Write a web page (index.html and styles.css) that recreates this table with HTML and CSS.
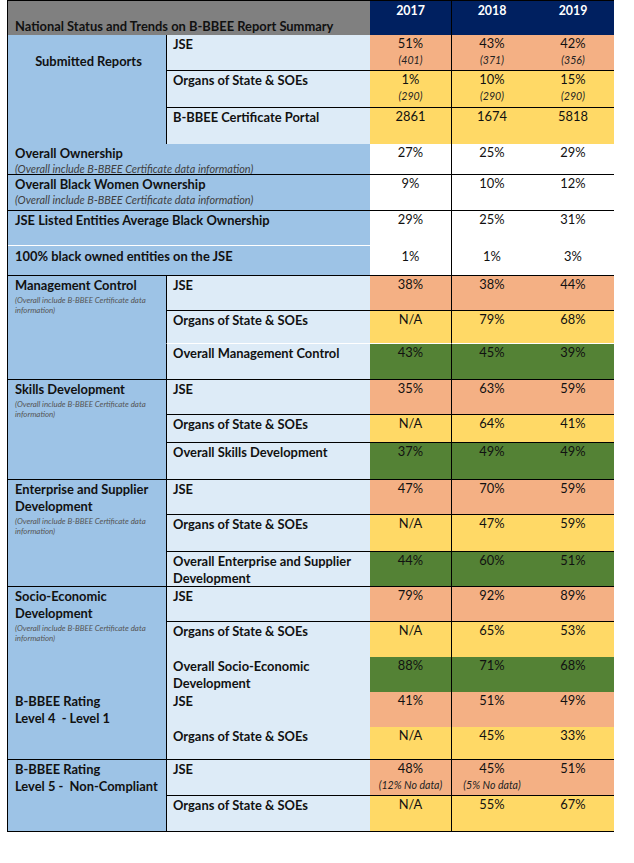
FILE: index.html
```html
<!DOCTYPE html>
<html lang="en">
<head>
<meta charset="utf-8">
<title>National Status and Trends on B-BBEE Report Summary</title>
<link rel="stylesheet" href="styles.css">
</head>
<body>
<div class="sheet">
  <div class="hd-title">National Status and Trends on B-BBEE Report Summary</div>
  <div class="hd-year">2017</div>
  <div class="hd-year mid">2018</div>
  <div class="hd-year">2019</div>

  <!-- Submitted Reports -->
  <div class="grp span3 centered">Submitted Reports</div>
  <div class="lbl bk">JSE</div>
  <div class="val or bk">51%<i>(401)</i></div>
  <div class="val or bk mid">43%<i>(371)</i></div>
  <div class="val or bk">42%<i>(356)</i></div>

  <div class="lbl bk">Organs of State &amp; SOEs</div>
  <div class="val ye bk">1%<i>(290)</i></div>
  <div class="val ye bk mid">10%<i>(290)</i></div>
  <div class="val ye bk">15%<i>(290)</i></div>

  <div class="lbl">B-BBEE Certificate Portal</div>
  <div class="val ye">2861</div>
  <div class="val ye mid">1674</div>
  <div class="val ye">5818</div>

  <!-- Ownership -->
  <div class="grp wide bk">Overall Ownership<em class="note">(Overall include B-BBEE Certificate data information)</em></div>
  <div class="val wh bk">27%</div>
  <div class="val wh bk mid">25%</div>
  <div class="val wh bk">29%</div>

  <div class="grp wide bk">Overall Black Women Ownership<em class="note">(Overall include B-BBEE Certificate data information)</em></div>
  <div class="val wh bk">9%</div>
  <div class="val wh bk mid">10%</div>
  <div class="val wh bk">12%</div>

  <div class="grp wide wl">JSE Listed Entities Average Black Ownership</div>
  <div class="val wh">29%</div>
  <div class="val wh mid">25%</div>
  <div class="val wh">31%</div>

  <div class="grp wide bk lower">100% black owned entities on the JSE</div>
  <div class="val wh bk lower">1%</div>
  <div class="val wh bk mid lower">1%</div>
  <div class="val wh bk lower">3%</div>

  <!-- Management Control -->
  <div class="grp span3 bk">Management Control<em class="tiny">(Overall include B-BBEE Certificate data information)</em></div>
  <div class="lbl bk">JSE</div>
  <div class="val or bk">38%</div>
  <div class="val or bk mid">38%</div>
  <div class="val or bk">44%</div>

  <div class="lbl wl">Organs of State &amp; SOEs</div>
  <div class="val ye wl">N/A</div>
  <div class="val ye wl mid">79%</div>
  <div class="val ye wl">68%</div>

  <div class="lbl bk">Overall Management Control</div>
  <div class="val gr bk">43%</div>
  <div class="val gr bk mid">45%</div>
  <div class="val gr bk">39%</div>

  <!-- Skills Development -->
  <div class="grp span3 bk">Skills Development<em class="tiny">(Overall include B-BBEE Certificate data information)</em></div>
  <div class="lbl bk">JSE</div>
  <div class="val or bk">35%</div>
  <div class="val or bk mid">63%</div>
  <div class="val or bk">59%</div>

  <div class="lbl bk">Organs of State &amp; SOEs</div>
  <div class="val ye bk">N/A</div>
  <div class="val ye bk mid">64%</div>
  <div class="val ye bk">41%</div>

  <div class="lbl bk">Overall Skills Development</div>
  <div class="val gr bk">37%</div>
  <div class="val gr bk mid">49%</div>
  <div class="val gr bk">49%</div>

  <!-- Enterprise and Supplier Development -->
  <div class="grp span3 bk">Enterprise and Supplier Development<em class="tiny">(Overall include B-BBEE Certificate data information)</em></div>
  <div class="lbl bk">JSE</div>
  <div class="val or bk">47%</div>
  <div class="val or bk mid">70%</div>
  <div class="val or bk">59%</div>

  <div class="lbl bk">Organs of State &amp; SOEs</div>
  <div class="val ye bk">N/A</div>
  <div class="val ye bk mid">47%</div>
  <div class="val ye bk">59%</div>

  <div class="lbl bk">Overall Enterprise and Supplier Development</div>
  <div class="val gr bk">44%</div>
  <div class="val gr bk mid">60%</div>
  <div class="val gr bk">51%</div>

  <!-- Socio-Economic Development -->
  <div class="grp span3">Socio-Economic Development<em class="tiny">(Overall include B-BBEE Certificate data information)</em></div>
  <div class="lbl bk">JSE</div>
  <div class="val or bk">79%</div>
  <div class="val or bk mid">92%</div>
  <div class="val or bk">89%</div>

  <div class="lbl">Organs of State &amp; SOEs</div>
  <div class="val ye">N/A</div>
  <div class="val ye mid">65%</div>
  <div class="val ye">53%</div>

  <div class="lbl">Overall Socio-Economic Development</div>
  <div class="val gr">88%</div>
  <div class="val gr mid">71%</div>
  <div class="val gr">68%</div>

  <!-- B-BBEE Rating Level 4 - Level 1 -->
  <div class="grp span2 bk">B-BBEE Rating<br>Level 4&nbsp; - Level 1</div>
  <div class="lbl">JSE</div>
  <div class="val or">41%</div>
  <div class="val or mid">51%</div>
  <div class="val or">49%</div>

  <div class="lbl bk">Organs of State &amp; SOEs</div>
  <div class="val ye bk">N/A</div>
  <div class="val ye bk mid">45%</div>
  <div class="val ye bk">33%</div>

  <!-- B-BBEE Rating Level 5 - Non-Compliant -->
  <div class="grp span2 bk">B-BBEE Rating<br>Level 5 -&nbsp; Non-Compliant</div>
  <div class="lbl bk">JSE</div>
  <div class="val or bk">48%<i>(12% No data)</i></div>
  <div class="val or bk mid">45%<i>(5% No data)</i></div>
  <div class="val or bk">51%</div>

  <div class="lbl bk">Organs of State &amp; SOEs</div>
  <div class="val ye bk">N/A</div>
  <div class="val ye bk mid">55%</div>
  <div class="val ye bk">67%</div>
</div>
</body>
</html>
```

FILE: styles.css
```css
html, body {
  margin: 0;
  padding: 0;
  background: #ffffff;
}

body {
  font-family: "Lato", "Open Sans", sans-serif;
  color: #111111;
}

.sheet {
  margin-left: 7px;
  width: 606px;
  display: grid;
  grid-template-columns: 158px 204px 81px 81px 82px;
  grid-template-rows:
    34px
    36px 37px 36px
    31px 36px 35px 30px
    35px 33px 36px
    35px 28px 37px
    35px 37px 35px
    35px 35px 35px
    35px 33px
    36px 36px;
  border-left: 1px solid #000;
  border-top: 1px solid #000;
}

.sheet > div {
  box-sizing: border-box;
  overflow: hidden;
}

/* header */
.hd-title {
  grid-column: span 2;
  background: #808080;
  display: flex;
  align-items: flex-end;
  padding: 0 0 0 7px;
  font-weight: 700;
  font-size: 12.9px;
  line-height: 17px;
  color: #111;
  white-space: nowrap;
}

.hd-year {
  background: #002060;
  color: #ffffff;
  font-weight: 700;
  font-size: 12.4px;
  line-height: 17px;
  padding-top: 1px;
  text-align: center;
}

/* column 1 group labels */
.grp {
  background: #9dc3e6;
  font-weight: 700;
  font-size: 12.9px;
  line-height: 17px;
  padding: 1px 4px 0 7px;
  display: flex;
  flex-direction: column;
  align-items: flex-start;
}

.span3 { grid-row: span 3; }
.span2 { grid-row: span 2; }
.wide { grid-column: span 2; }

.centered {
  align-items: center;
  padding-top: 18px;
}

.grp.lower { padding-top: 2px; }

.note {
  font-weight: 400;
  font-style: italic;
  font-size: 10.9px;
  line-height: 14px;
  color: #404040;
  white-space: nowrap;
}

.tiny {
  font-weight: 400;
  font-style: italic;
  font-size: 7.9px;
  line-height: 10px;
  color: #555555;
  margin-top: 1px;
  max-width: 142px;
}

/* column 2 row labels */
.lbl {
  background: #ddebf7;
  border-left: 1px solid #000;
  font-weight: 700;
  font-size: 12.9px;
  line-height: 17px;
  padding: 1px 4px 0 6px;
}

/* values */
.val {
  font-size: 12.9px;
  line-height: 17px;
  padding-top: 0;
  text-align: center;
  display: flex;
  flex-direction: column;
  align-items: center;
}

.val i {
  font-size: 10.6px;
  line-height: 17px;
  color: #222;
  white-space: nowrap;
}

.val.lower { padding-top: 2px; }

.mid { border-left: 1px solid #000; }

.or { background: #f4b084; }
.ye { background: #ffd966; }
.gr { background: #548235; }
.wh { background: #ffffff; }

.bk { border-bottom: 1px solid #000; }
.wl { border-bottom: 1px solid #ffffff; }
```
